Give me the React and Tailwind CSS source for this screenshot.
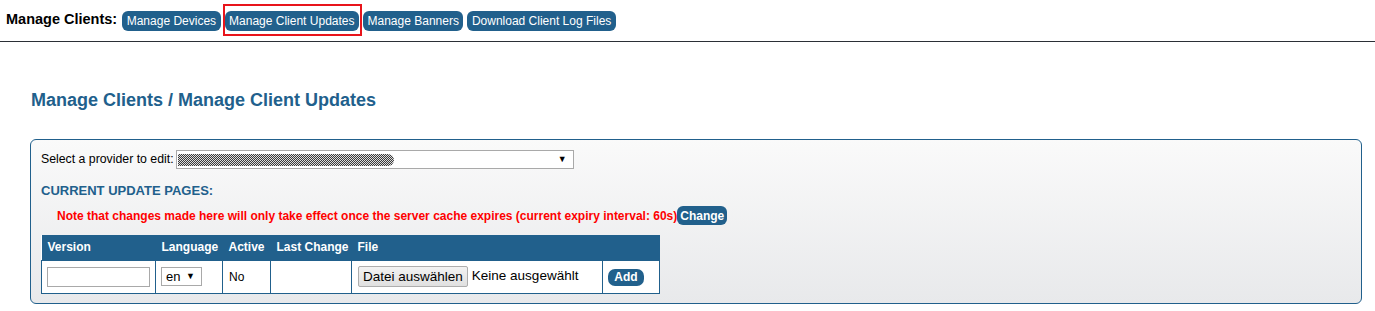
import React from 'react';

const navItems = ['Manage Devices', 'Manage Client Updates', 'Manage Banners', 'Download Client Log Files'];

function NavButton({ label, active }) {
  return (
    <div className="relative">
      <button className="h-[20px] px-[4.5px] rounded-[6px] bg-[#21608c] text-white text-[12px] leading-[20px] whitespace-nowrap">
        {label}
      </button>
      {active && (
        <div className="absolute -left-[2px] -right-[3px] -top-[4px] -bottom-[4px] border-2 border-[#e8141b] pointer-events-none"></div>
      )}
    </div>
  );
}

function Caret() {
  return <span className="text-[9px] leading-none text-black">▼</span>;
}

export default function App() {
  return (
    <div className="w-[1375px] h-[311px] bg-white font-['Liberation_Sans',Arial,sans-serif] text-black overflow-hidden">
      {/* Top navigation */}
      <div className="h-[42px] flex items-center gap-[4px] pl-[6px] pb-[1px] border-b border-[#2b2f36]">
        <span className="text-[14.5px] font-bold mr-[1px]">Manage Clients:</span>
        {navItems.map((item) => (
          <NavButton key={item} label={item} active={item === 'Manage Client Updates'} />
        ))}
      </div>

      {/* Heading */}
      <h1 className="mt-[48px] ml-[31px] text-[18px] leading-[20px] font-bold text-[#21608c]">
        Manage Clients / Manage Client Updates
      </h1>

      {/* Panel */}
      <div className="mt-[29px] ml-[30px] mr-[13px] h-[165px] rounded-[6px] border-[1.5px] border-[#21608c] bg-gradient-to-b from-[#fafafa] to-[#e8e9eb] pl-[10px] pt-[10px]">
        <div className="flex items-center h-[19px] text-[12.3px]">
          <span className="mr-[2px]">Select a provider to edit:</span>
          <div className="w-[398px] h-[19px] bg-white border border-[#a9a9a9] flex items-center justify-between pl-[1px] pr-[6px]">
            <div className="w-[216px] h-[12px] rounded-r-full bg-[repeating-conic-gradient(#3a3a3a_0%_25%,#dcdcdc_0%_50%)] bg-[length:2px_2px]"></div>
            <Caret />
          </div>
        </div>

        <div className="mt-[14px] text-[13px] font-bold text-[#21608c] leading-[16px]">CURRENT UPDATE PAGES:</div>

        <div className="mt-[7px] ml-[16px] flex items-center h-[19px]">
          <span className="text-[12px] font-bold text-[#ff0000] whitespace-nowrap">
            Note that changes made here will only take effect once the server cache expires (current expiry interval: 60s)
          </span>
          <button className="h-[19px] px-[3px] rounded-[6px] bg-[#21608c] text-white text-[12px] font-bold">Change</button>
        </div>

        <table className="mt-[10px] table-fixed w-[618px] border-collapse text-[12px] bg-white whitespace-nowrap">
          <thead>
            <tr className="h-[25px] bg-[#21608c] text-white text-left">
              <th className="w-[114px] pl-[6px] font-bold">Version</th>
              <th className="w-[67px] pl-[6px] font-bold">Language</th>
              <th className="w-[48px] pl-[6px] font-bold">Active</th>
              <th className="w-[81px] pl-[6px] font-bold">Last Change</th>
              <th className="w-[251px] pl-[6px] font-bold">File</th>
              <th className="w-[57px] pl-[6px] font-bold"></th>
            </tr>
          </thead>
          <tbody>
            <tr className="h-[33px]">
              <td className="border border-[#21608c] px-[5px]">
                <div className="w-[103px] h-[20px] border border-[#a9a9a9] bg-white"></div>
              </td>
              <td className="border border-[#21608c] px-[5px]">
                <div className="w-[41px] h-[19px] border border-[#a9a9a9] bg-white flex items-center justify-between pl-[4px] pr-[6px] text-[13px]">
                  <span>en</span>
                  <Caret />
                </div>
              </td>
              <td className="border border-[#21608c] px-[6px]">No</td>
              <td className="border border-[#21608c]"></td>
              <td className="border border-[#21608c] px-[6px]">
                <div className="flex items-center text-[13.5px]">
                  <span className="h-[21px] px-[4px] rounded-[2px] border border-[#adadad] bg-gradient-to-b from-[#f2f2f2] to-[#e0e0e0] leading-[19px]">
                    Datei auswählen
                  </span>
                  <span className="ml-[4px]">Keine ausgewählt</span>
                </div>
              </td>
              <td className="border border-[#21608c] px-[5px]">
                <button className="w-[36px] h-[17px] rounded-[7px] bg-[#21608c] text-white font-bold text-[12px] leading-[17px]">Add</button>
              </td>
            </tr>
          </tbody>
        </table>
      </div>
    </div>
  );
}
